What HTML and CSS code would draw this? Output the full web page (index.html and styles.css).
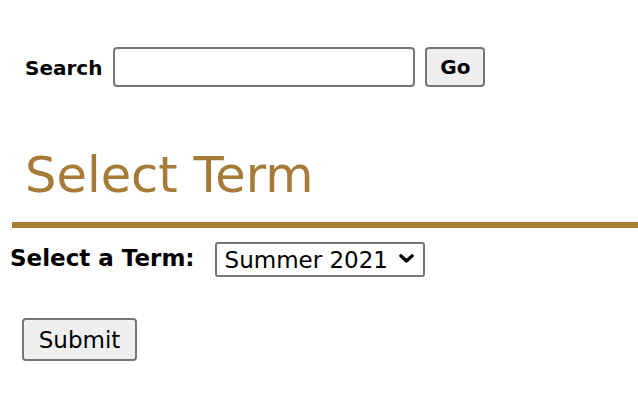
FILE: index.html
```html
<!DOCTYPE html>
<html lang="en">
<head>
<meta charset="utf-8">
<title>Select Term</title>
<link rel="stylesheet" href="styles.css">
</head>
<body>
<form class="search-row">
  <label class="search-label" for="q">Search</label>
  <input class="search-input" id="q" type="text">
  <button class="btn btn-go" type="button">Go</button>
</form>
<div class="title-block">
  <h1 class="title">Select Term</h1>
</div>
<form class="term-form">
  <div class="term-row">
    <label class="term-label" for="term">Select a Term:</label>
    <div class="select-wrap">
      <select class="term-select" id="term">
        <option>Summer 2021</option>
        <option>Fall 2021</option>
        <option>Spring 2021</option>
      </select>
      <svg class="chevron" width="15" height="9" viewBox="0 0 15 9"><path d="M1.8 1.8 L7.5 7 L13.2 1.8" fill="none" stroke="#000" stroke-width="3.2" stroke-linecap="round" stroke-linejoin="round"/></svg>
    </div>
  </div>
  <button class="btn btn-submit" type="button">Submit</button>
</form>
</body>
</html>
```
FILE: styles.css
```css
html, body {
  margin: 0;
  padding: 0;
  background: #fff;
}
body {
  font-family: "DejaVu Sans", Verdana, sans-serif;
  color: #000;
  overflow: hidden;
}
.search-row {
  display: flex;
  align-items: center;
  gap: 10px;
  margin: 47px 0 0 0;
  padding-left: 25px;
}
.search-label {
  font-weight: bold;
  font-size: 20px;
  margin-right: 1px;
  margin-top: 2px;
}
.search-input {
  box-sizing: border-box;
  width: 302px;
  height: 40px;
  border: 2px solid #767676;
  border-radius: 4px;
  padding: 0 6px;
  font: 20px "DejaVu Sans", sans-serif;
}
.btn {
  box-sizing: border-box;
  background: #efefef;
  border: 2px solid #767676;
  border-radius: 4px;
  color: #000;
  font-family: "DejaVu Sans", Verdana, sans-serif;
  padding: 0;
}
.btn-go {
  width: 60px;
  height: 40px;
  font-size: 20px;
  font-weight: bold;
}
.title-block {
  margin: 59px 0 0 12px;
  border-bottom: 6px solid #a98030;
  padding: 0 0 18px 13px;
}
.title {
  margin: 0;
  font-size: 49.5px;
  line-height: 58px;
  font-weight: normal;
  color: #a57b37;
}
.term-form {
  padding-left: 10px;
}
.term-row {
  display: flex;
  align-items: center;
  gap: 20px;
  margin-top: 14px;
}
.term-label {
  font-weight: bold;
  font-size: 23px;
  margin-top: -4px;
}
.select-wrap {
  position: relative;
  display: flex;
}
.term-select {
  appearance: none;
  -webkit-appearance: none;
  box-sizing: border-box;
  width: 210px;
  height: 35px;
  border: 2px solid #767676;
  border-radius: 3px;
  background: #fff;
  padding: 0 0 0 8px;
  font: 23px "DejaVu Sans", Verdana, sans-serif;
  color: #000;
}
.chevron {
  position: absolute;
  right: 11px;
  top: 12px;
  pointer-events: none;
}
.btn-submit {
  display: block;
  margin: 41px 0 0 12px;
  width: 115px;
  height: 43px;
  font-size: 23px;
}
```
